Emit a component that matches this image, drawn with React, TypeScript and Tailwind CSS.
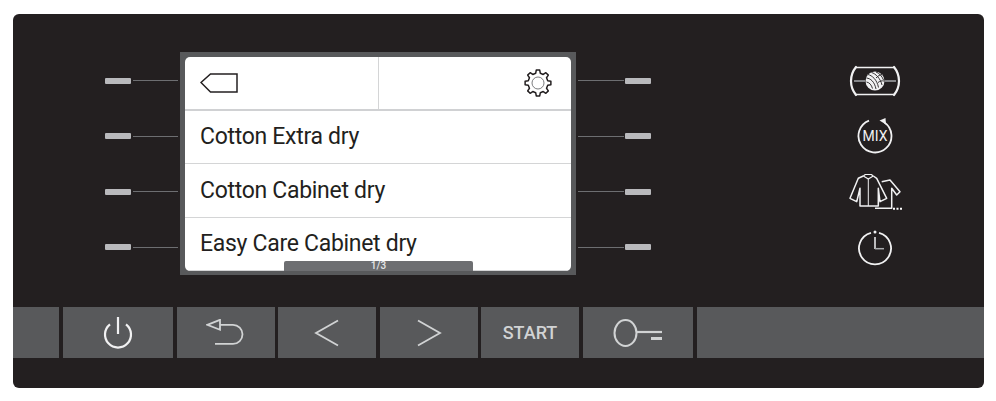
const rows = [0, 1, 2, 3]

function gearPath(cx: number, cy: number, outer: number, inner: number, teeth: number) {
  const pts: string[] = []
  for (let i = 0; i < teeth; i++) {
    const step = (Math.PI * 2) / teeth
    const a = i * step - Math.PI / 2
    const corners: [number, number][] = [
      [a - step * 0.3, inner],
      [a - step * 0.17, outer],
      [a + step * 0.17, outer],
      [a + step * 0.3, inner],
    ]
    corners.forEach(([t, r]) => {
      pts.push(`${(cx + Math.cos(t) * r).toFixed(2)} ${(cy + Math.sin(t) * r).toFixed(2)}`)
    })
  }
  return `M${pts.join("L")}Z`
}

function LeftLed() {
  return (
    <div className="flex-1 flex items-center pl-[92px]">
      <div className="w-[26px] h-[6px] bg-[#b9b9bc] rounded-[1px]" />
      <div className="w-[45px] h-px ml-[2px] bg-[#6d6e71]" />
    </div>
  )
}

function RightLed() {
  return (
    <div className="flex-1 flex items-center pl-[2px]">
      <div className="w-[46px] h-px bg-[#6d6e71]" />
      <div className="w-[26px] h-[6px] ml-px bg-[#b9b9bc] rounded-[1px]" />
    </div>
  )
}

function ListRow({ label }: { label: string }) {
  return (
    <div className="h-[53.3px] flex items-center pl-[15px] pt-px border-b border-[#d4d5d6] text-[23px] text-[#231f20] tracking-[-0.3px] last:border-b-0">
      {label}
    </div>
  )
}

function Yarn() {
  return (
    <svg width="52" height="32" viewBox="0 0 52 32" fill="none" stroke="#f1f1f2">
      <path d="M7 2C3 7 2 11 2 16s1 9 5 14M45 2c4 5 5 9 5 14s-1 9-5 14" strokeWidth="2.200" strokeLinecap="round" />
      <path d="M7 2.500h38M7 29.500h38" strokeWidth="1.400" />
      <path d="M5 16h11M36 16h11" stroke="#a7a9ac" strokeWidth="1.500" />
      <circle cx="26" cy="16" r="9.500" fill="#f1f1f2" stroke="none" />
      <path
        d="M17.500 13c4 .5 8 3.500 9.500 11M19 9.500c4 1 9 5 10.500 13M22.500 7.500c4 1 9 6 10.500 12.500M27 7c3 1 6 4 7.500 8M17.500 17c3 .5 5 3 6 6.500M27 13c2-2 4-3.500 6-3.500M29 17.500c2-1.500 4-2 6-1.500"
        stroke="#231f20"
        strokeWidth="0.900"
      />
    </svg>
  )
}

function MixIcon() {
  return (
    <svg width="38" height="38" viewBox="0 0 38 38" fill="none" stroke="#f1f1f2">
      <path d="M28.500 5.500A16.500 16.500 0 1 1 13 3.600" strokeWidth="1.800" />
      <path d="M23.500 3.500 29.500 1l.5 6.500z" fill="#f1f1f2" stroke="none" />
      <text x="19" y="24" textAnchor="middle" fontSize="14" fill="#f1f1f2" stroke="none" fontFamily="Roboto, sans-serif">
        MIX
      </text>
    </svg>
  )
}

function ShirtIcon() {
  return (
    <svg width="56" height="40" viewBox="0 0 56 40" fill="none" stroke="#f1f1f2" strokeWidth="1.500" strokeLinejoin="round">
      <g transform="translate(1 0)">
        <path d="M15.300 4 10.300 6.300 2 26.300l6.700 3.400L12 16.300V34h18.300V16.300l1.700 13.400 6.700-3.400-10-20-3.400-2.300" />
        <path d="M15.300 4 20.300 7l5-3M15.300 4l2-1.500h6l2 1.500" strokeWidth="1.200" />
        <path d="M20.300 7v27" strokeWidth="1" />
        <path d="M33.700 9.700 42 8l10 11.700-3.300 3.300-5-6.700v20H27" />
        <path d="M45 36.700h2M48.500 36.700h2M52 36.700h2" strokeWidth="2" stroke="#ffffff" />
      </g>
    </svg>
  )
}

function ClockIcon() {
  return (
    <svg width="38" height="38" viewBox="0 0 38 38" fill="none" stroke="#f1f1f2">
      <path d="M23 4.800A16 16 0 1 1 15 4.800" strokeWidth="1.800" />
      <circle cx="19" cy="4" r="1.500" fill="#f1f1f2" stroke="none" />
      <path d="M19 9v12" strokeWidth="1.500" />
      <path d="M19 20.700h9" stroke="#a7a9ac" strokeWidth="1.500" />
    </svg>
  )
}

export default function App() {
  return (
    <div className="w-[996px] h-[401px] bg-white pt-[14px] pl-[13px] font-['Roboto',sans-serif]">
      <div className="w-[971px] h-[374px] bg-[#231f20] rounded-[6px] flex flex-col">
        <div className="h-[293px] pt-[38px] flex">
          {/* left indicators */}
          <div className="w-[167px] h-[222px] mt-px flex flex-col">
            {rows.map((r) => (
              <LeftLed key={r} />
            ))}
          </div>

          {/* display */}
          <div className="w-[396px] h-[223px] bg-[#58595b] p-[5px] pb-[4px]">
            <div className="relative h-full bg-white rounded-[5px] overflow-hidden">
              <div className="h-[54px] flex border-b-2 border-[#d0d1d3]">
                <div className="w-[194px] flex items-center pl-[15px] border-r border-[#d4d5d6]">
                  <svg width="38" height="20" viewBox="0 0 38 20" fill="none" stroke="#231f20" strokeWidth="1.500">
                    <path d="M1 9.500 10.500 1h26.500v18H10.500z" />
                  </svg>
                </div>
                <div className="flex-1 flex items-center justify-end pr-[19px]">
                  <svg width="28" height="28" viewBox="0 0 28 28" fill="none">
                    <path d={gearPath(14, 14, 13, 10, 8)} stroke="#231f20" strokeWidth="1.500" strokeLinejoin="round" />
                    <circle cx="14" cy="14" r="6" stroke="#6d6e71" strokeWidth="0.900" />
                  </svg>
                </div>
              </div>
              <ListRow label="Cotton Extra dry" />
              <ListRow label="Cotton Cabinet dry" />
              <ListRow label="Easy Care Cabinet dry" />
              <div className="absolute left-[99px] bottom-0 w-[189px] h-[10px] bg-[#6d6e71] rounded-t-[2px] flex items-center justify-center text-[10px] font-medium leading-[10px] text-[#e6e7e8]">
                1/3
              </div>
            </div>
          </div>

          {/* right indicators */}
          <div className="w-[75px] h-[222px] mt-px flex flex-col">
            {rows.map((r) => (
              <RightLed key={r} />
            ))}
          </div>

          {/* function icons */}
          <div className="w-[62px] ml-[193px] h-[222px] mt-px flex flex-col items-center">
            <div className="flex-1 flex items-center justify-center">
              <Yarn />
            </div>
            <div className="flex-1 flex items-center justify-center">
              <MixIcon />
            </div>
            <div className="flex-1 flex items-center justify-center">
              <ShirtIcon />
            </div>
            <div className="flex-1 flex items-center justify-center">
              <ClockIcon />
            </div>
          </div>
        </div>

        {/* button strip */}
        <div className="h-[51px] flex text-[#d1d3d4]">
          <div className="w-[46px] bg-[#58595b]" />
          <div className="w-[110px] ml-[4px] bg-[#58595b] flex items-center justify-center">
            <svg width="30" height="34" viewBox="0 0 30 34" fill="none" stroke="#f1f1f2" strokeWidth="2.200">
              <path d="M15 1v17" />
              <path d="M7 8.300a13 13 0 1 0 16 0" />
            </svg>
          </div>
          <div className="w-[98px] ml-[4px] bg-[#58595b] flex items-center justify-center">
            <svg width="40" height="28" viewBox="0 0 40 28" fill="none" stroke="#d1d3d4" strokeWidth="1.800">
              <path d="M1.300 5.800 14 .8v10z" />
              <path d="M14 5.800h13a9.500 9.500 0 0 1 0 19H9" />
            </svg>
          </div>
          <div className="w-[98px] ml-[3px] bg-[#58595b] flex items-center justify-center">
            <svg width="26" height="28" viewBox="0 0 26 28" fill="none" stroke="#d1d3d4" strokeWidth="1.800">
              <path d="M24 1.500 2 14l22 12.500" />
            </svg>
          </div>
          <div className="w-[98px] ml-[4px] bg-[#58595b] flex items-center justify-center">
            <svg width="26" height="28" viewBox="0 0 26 28" fill="none" stroke="#d1d3d4" strokeWidth="1.800">
              <path d="M2 1.500 24 14 2 26.500" />
            </svg>
          </div>
          <div className="w-[98px] ml-[3px] bg-[#58595b] flex items-center justify-center text-[18px] font-medium">
            START
          </div>
          <div className="w-[110px] ml-[4px] bg-[#58595b] flex items-center justify-center">
            <svg width="50" height="30" viewBox="0 0 50 30" fill="none" stroke="#d1d3d4">
              <ellipse cx="12.500" cy="15" rx="11" ry="13" strokeWidth="2" />
              <path d="M24 14h25" strokeWidth="2.200" />
              <path d="M38 20.500h11" strokeWidth="3" />
            </svg>
          </div>
          <div className="flex-1 ml-[4px] bg-[#58595b]" />
        </div>
      </div>
    </div>
  )
}
